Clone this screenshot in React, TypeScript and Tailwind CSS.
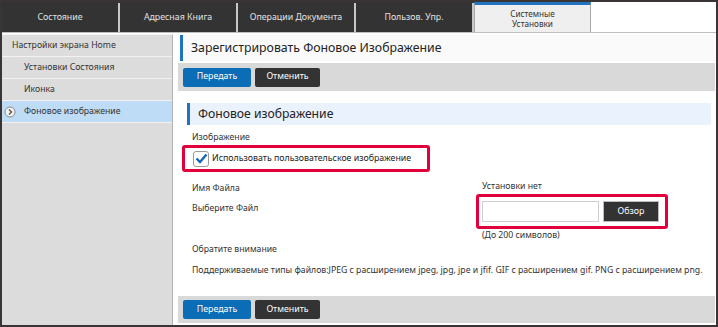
import React from "react";

const font = { fontFamily: "'Noto Sans', 'Open Sans', sans-serif" };

function Tab({ label }: { label: string }) {
  return (
    <div className="w-[118px] shrink-0 h-full flex items-center justify-center text-[8.8px] text-[#e2e2e2] border-r-2 border-[#c8c8c8]">
      {label}
    </div>
  );
}

function SideItem({ label, indent, active }: { label: string; indent?: boolean; active?: boolean }) {
  return (
    <div
      className={`h-[22px] flex items-center border-b border-[#f2f2f2] text-[8.7px] text-[#333] relative ${
        indent ? "pl-[22px]" : "pl-[10px]"
      } ${active ? "bg-[#bfdcf6]" : ""}`}
    >
      {active && (
        <svg className="absolute left-[2px] top-[5px]" width="12" height="12" viewBox="0 0 12 12">
          <circle cx="6" cy="6" r="5" fill="#f2f2f2" stroke="#8a8a8a" strokeWidth="1" />
          <path d="M5 3.5 L7.5 6 L5 8.5" fill="none" stroke="#555" strokeWidth="1.4" />
        </svg>
      )}
      {label}
    </div>
  );
}

function Buttons() {
  return (
    <div className="flex items-center gap-[4px] pl-[5px]">
      <div className="w-[68px] h-[19px] rounded-[2px] bg-[#0b6db5] text-white text-[8.8px] flex items-center justify-center">
        Передать
      </div>
      <div className="w-[65px] h-[19px] rounded-[2px] bg-[#333333] text-white text-[8.8px] flex items-center justify-center">
        Отменить
      </div>
    </div>
  );
}

export default function App() {
  return (
    <div
      style={font}
      className="w-[718px] h-[327px] border-2 border-[#3b3434] bg-white flex flex-col overflow-hidden"
    >
      {/* Tabs */}
      <div className="h-[31px] shrink-0 flex bg-white border-b border-[#bdbdbd]">
        <div className="flex h-full bg-[#333333] pt-[1px] shrink-0">
          <Tab label="Состояние" />
          <Tab label="Адресная Книга" />
          <Tab label="Операции Документа" />
          <Tab label="Пользов. Упр." />
        </div>
        <div className="w-[117px] shrink-0 h-full bg-[#efefef] border-t-[3px] border-t-[#1f73bf] border-l border-r border-[#a8a8a8] flex flex-col items-center justify-center text-[8.2px] leading-[10px] text-[#333]">
          <span>Системные</span>
          <span>Установки</span>
        </div>
        <div className="flex-1" />
      </div>

      {/* Body */}
      <div className="flex-1 flex mt-[1px] min-h-0">
        {/* Sidebar */}
        <div className="w-[171px] shrink-0 bg-[#dcdcdc] border-r border-[#b4b4b4] border-t border-t-[#f2f2f2]">
          <SideItem label="Настройки экрана Home" />
          <SideItem label="Установки Состояния" indent />
          <SideItem label="Иконка" indent />
          <SideItem label="Фоновое изображение" indent active />
        </div>

        {/* Main */}
        <div className="flex-1 min-w-0 flex flex-col pl-[5px] pr-[1px] pb-[2px] bg-white">
          <div className="mt-[1px] h-[26px] flex items-center bg-[#fafafa]">
            <div className="ml-[2px] w-[3px] h-full bg-[#1f73bf]" />
            <span className="ml-[8px] text-[12.3px] text-[#222]">Зарегистрировать Фоновое Изображение</span>
          </div>
          <div className="mt-[2px] h-[28px] bg-[#d9d9d9] flex items-center">
            <Buttons />
          </div>

          <div className="mt-[12px] ml-[9px] mr-[4px] h-[22px] bg-[#eaf2fd] flex items-center">
            <div className="w-[3px] h-full bg-[#1f73bf]" />
            <span className="ml-[8px] text-[12.2px] text-[#222]">Фоновое изображение</span>
          </div>

          <div className="mt-[4px] pl-[14px] h-[16px] leading-[16px] text-[8.7px] text-[#333]">Изображение</div>
          <div className="ml-[4px] w-[248px] h-[27px] border-[3px] border-[#e2003c] rounded-[3px] flex items-center pl-[8px]">
            <div className="w-[16px] h-[16px] shrink-0 rounded-[3px] border border-[#9a9a9a] bg-white flex items-center justify-center">
              <svg width="13" height="11" viewBox="0 0 13 11">
                <path d="M1.5 5.5 L5 9 L11.5 1.5" fill="none" stroke="#1467b8" strokeWidth="2.4" />
              </svg>
            </div>
            <span className="ml-[3px] text-[8.8px] text-[#222] whitespace-nowrap">Использовать пользовательское изображение</span>
          </div>

          <div className="mt-[7px] flex">
            <div className="w-[298px] shrink-0 pl-[14px] flex flex-col gap-[4px] pt-[1px]">
              <div className="h-[16px] leading-[16px] text-[8.7px] text-[#333]">Имя Файла</div>
              <div className="h-[16px] leading-[16px] text-[8.7px] text-[#333]">Выберите Файл</div>
            </div>
            <div className="flex flex-col">
              <div className="h-[15px] leading-[15px] pl-[6px] text-[8.7px] text-[#333]">Установки нет</div>
              <div className="w-[192px] h-[35px] border-[3px] border-[#e2003c] rounded-[3px] px-[3px] flex items-center gap-[4px]">
                <div className="w-[117px] h-[21px] border border-[#cfcfcf] bg-white" />
                <div className="w-[56px] h-[21px] bg-[#333333] border border-[#bdbdbd] text-white text-[8.8px] flex items-center justify-center">
                  Обзор
                </div>
              </div>
              <div className="h-[12px] leading-[12px] pl-[6px] text-[8.7px] text-[#333]">(До 200 символов)</div>
            </div>
          </div>

          <div className="mt-[1px] pl-[14px] h-[14px] leading-[14px] text-[8.7px] text-[#333]">Обратите внимание</div>
          <div className="mt-[7px] pl-[14px] h-[14px] leading-[14px] text-[8.7px] text-[#333] whitespace-nowrap">
            Поддерживаемые типы файлов:JPEG с расширением jpeg, jpg, jpe и jfif. GIF с расширением gif. PNG с расширением png.
          </div>

          <div className="mt-auto h-[27px] bg-[#d9d9d9] flex items-center">
            <Buttons />
          </div>
        </div>
      </div>
    </div>
  );
}
